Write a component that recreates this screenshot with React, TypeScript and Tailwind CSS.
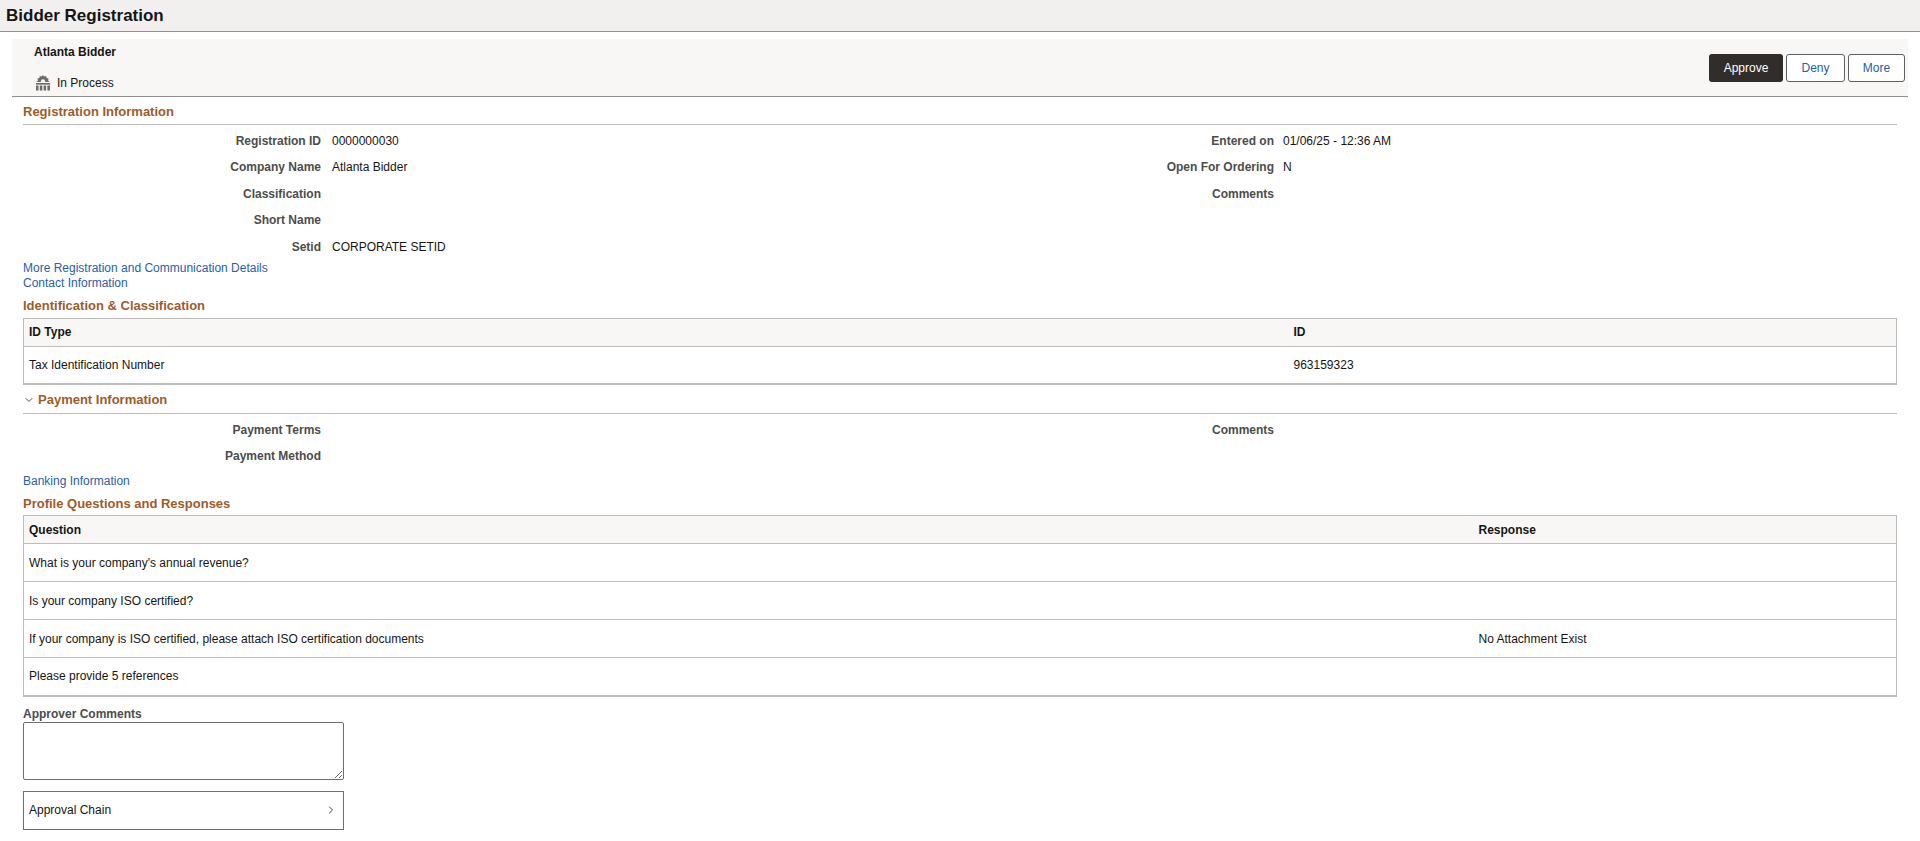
import { ChevronDown, ChevronRight } from "lucide-react";

const LEFT = [
  ["Registration ID", "0000000030"],
  ["Company Name", "Atlanta Bidder"],
  ["Classification", ""],
  ["Short Name", ""],
  ["Setid", "CORPORATE SETID"],
];
const RIGHT = [
  ["Entered on", "01/06/25 - 12:36 AM"],
  ["Open For Ordering", "N"],
  ["Comments", ""],
];
const QUESTIONS = [
  ["What is your company's annual revenue?", ""],
  ["Is your company ISO certified?", ""],
  ["If your company is ISO certified, please attach ISO certification documents", "No Attachment Exist"],
  ["Please provide 5 references", ""],
];

function Field({ label, value }: { label: string; value: string }) {
  return (
    <div className="flex h-[26.5px] items-start">
      <div className="w-[298px] text-right font-bold text-[#4c4c4c]">{label}</div>
      <div className="pl-[11px] text-[#161513]">{value}</div>
    </div>
  );
}

function RightField({ label, value }: { label: string; value: string }) {
  return (
    <div className="flex h-[26.5px] items-start">
      <div className="w-[326px] text-right font-bold text-[#4c4c4c]">{label}</div>
      <div className="pl-[9px] text-[#161513]">{value}</div>
    </div>
  );
}

function Heading({ children }: { children: React.ReactNode }) {
  return <div className="text-[13px] font-bold text-[#9e5b2a]">{children}</div>;
}

function GearIcon() {
  return (
    <svg width="18" height="18" viewBox="0 0 18 18" fill="#6b6b6b">
      <path d="M9 1l1.2 1.6 2-.6.4 2 2 .4-.6 2L15.6 8H2.4L4 6.4l-.6-2 2-.4.4-2 2 .6z" />
      <circle cx="9" cy="7.5" r="2.2" fill="#f8f7f5" />
      <rect x="2" y="9" width="14" height="1.6" />
      <rect x="2" y="11.5" width="2.5" height="5" />
      <rect x="5.8" y="11.5" width="2.5" height="5" />
      <rect x="9.6" y="11.5" width="2.5" height="5" />
      <rect x="13.4" y="11.5" width="2.6" height="5" />
    </svg>
  );
}

export default function App() {
  return (
    <div className="min-h-[841px] bg-white font-[Liberation_Sans,Arial,sans-serif] text-[12px] text-[#161513]">
      <div className="flex h-[32px] items-center border-b border-[#8f8f8f] bg-[#f1f0ef] px-[6px]">
        <h1 className="text-[17px] font-bold text-[#161513]">Bidder Registration</h1>
      </div>

      <div className="mx-[12px] mt-[7px] flex h-[58px] items-stretch justify-between border-b border-[#8f8f8f] bg-[#f8f7f5] pr-[3px]">
        <div className="flex flex-col justify-between py-[4px] pl-[22px]">
          <div className="text-[12px] font-bold">Atlanta Bidder</div>
          <div className="flex items-center gap-[5px]">
            <GearIcon />
            <span>In Process</span>
          </div>
        </div>
        <div className="flex items-center gap-[3px]">
          <button className="h-[28px] w-[74px] rounded-[3px] bg-[#312d2a] text-white">Approve</button>
          <button className="h-[28px] w-[59px] rounded-[3px] border border-[#5f5f5f] bg-white text-[#2860a8]">Deny</button>
          <button className="h-[28px] w-[57px] rounded-[3px] border border-[#5f5f5f] bg-white text-[#2860a8]">More</button>
        </div>
      </div>

      <div className="ml-[23px] mr-[23px]">
        <div className="mt-[5px] border-b border-[#bdbdbd] pb-[2px]">
          <Heading>Registration Information</Heading>
        </div>
        <div className="mt-[7px] flex">
          <div className="w-[925px]">
            {LEFT.map(([l, v]) => (
              <Field key={l} label={l} value={v} />
            ))}
          </div>
          <div>
            {RIGHT.map(([l, v]) => (
              <RightField key={l} label={l} value={v} />
            ))}
          </div>
        </div>
        <div className="mt-[-3px] flex flex-col leading-[15px] text-[#2860a8]">
          <span>More Registration and Communication Details</span>
          <span>Contact Information</span>
        </div>

        <div className="mt-[5px]">
          <Heading>Identification &amp; Classification</Heading>
        </div>
        <table className="mt-[2px] w-full border-collapse border border-[#bdbdbd] border-b-2">
          <thead>
            <tr className="h-[28px] border-b border-[#bdbdbd] bg-[#f8f7f5] text-left font-bold">
              <th className="w-[1270px] pl-[5px]">ID Type</th>
              <th>ID</th>
            </tr>
          </thead>
          <tbody>
            <tr className="h-[38px]">
              <td className="pl-[5px]">Tax Identification Number</td>
              <td>963159323</td>
            </tr>
          </tbody>
        </table>

        <div className="mt-[5px] flex items-center gap-[3px] border-b border-[#bdbdbd] pb-[3px]">
          <ChevronDown size={12} strokeWidth={2} className="text-[#555]" />
          <Heading>Payment Information</Heading>
        </div>
        <div className="mt-[7px] flex">
          <div className="w-[925px]">
            <Field label="Payment Terms" value="" />
            <Field label="Payment Method" value="" />
          </div>
          <div>
            <RightField label="Comments" value="" />
          </div>
        </div>
        <div className="mt-[-2px] text-[#2860a8]">Banking Information</div>

        <div className="mt-[4px]">
          <Heading>Profile Questions and Responses</Heading>
        </div>
        <table className="mt-[2px] w-full border-collapse border border-[#bdbdbd] border-b-2">
          <thead>
            <tr className="h-[28px] border-b border-[#bdbdbd] bg-[#f8f7f5] text-left font-bold">
              <th className="w-[1455px] pl-[5px]">Question</th>
              <th>Response</th>
            </tr>
          </thead>
          <tbody>
            {QUESTIONS.map(([q, r]) => (
              <tr key={q} className="h-[38px] border-b border-[#bdbdbd]">
                <td className="pl-[5px]">{q}</td>
                <td>{r}</td>
              </tr>
            ))}
          </tbody>
        </table>

        <div className="mt-[10px] font-bold leading-[14px] text-[#4c4c4c]">Approver Comments</div>
        <textarea className="mt-[1px] block h-[58px] w-[321px] rounded-[2px] border border-[#6f6f6f]" />
        <div className="mt-[11px] flex h-[39px] w-[321px] items-center justify-between border border-[#6f6f6f] pl-[5px] pr-[6px]">
          <span>Approval Chain</span>
          <ChevronRight size={12} className="text-[#444]" />
        </div>
      </div>
    </div>
  );
}
